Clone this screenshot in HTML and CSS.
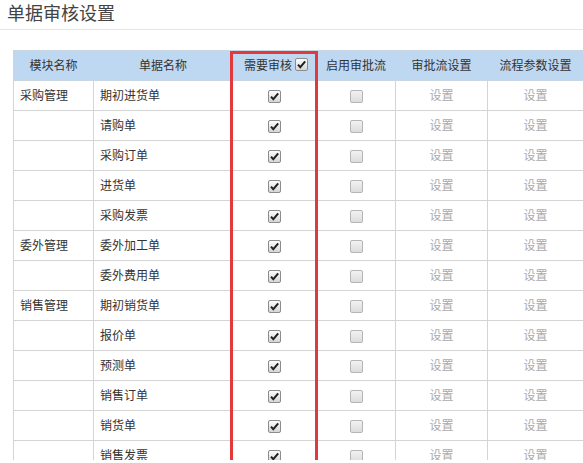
FILE: index.html
```html
<!DOCTYPE html>
<html lang="zh">
<head>
<meta charset="utf-8">
<link rel="stylesheet" href="styles.css">
</head>
<body>
<div class="page-title">单据审核设置</div>
<div class="content">
  <div class="scroll">
    <table class="grid">
      <colgroup>
        <col class="c1"><col class="c2"><col class="c3"><col class="c4"><col class="c5"><col class="c6">
      </colgroup>
      <thead>
        <tr>
          <th>模块名称</th>
          <th>单据名称</th>
          <th><span class="hd-audit">需要审核<span class="cb on"></span></span></th>
          <th>启用审批流</th>
          <th>审批流设置</th>
          <th>流程参数设置</th>
        </tr>
      </thead>
      <tbody>
        <tr><td class="l">采购管理</td><td class="l">期初进货单</td><td><span class="cb on"></span></td><td><span class="cb off"></span></td><td class="set">设置</td><td class="set">设置</td></tr>
        <tr><td class="l"></td><td class="l">请购单</td><td><span class="cb on"></span></td><td><span class="cb off"></span></td><td class="set">设置</td><td class="set">设置</td></tr>
        <tr><td class="l"></td><td class="l">采购订单</td><td><span class="cb on"></span></td><td><span class="cb off"></span></td><td class="set">设置</td><td class="set">设置</td></tr>
        <tr><td class="l"></td><td class="l">进货单</td><td><span class="cb on"></span></td><td><span class="cb off"></span></td><td class="set">设置</td><td class="set">设置</td></tr>
        <tr><td class="l"></td><td class="l">采购发票</td><td><span class="cb on"></span></td><td><span class="cb off"></span></td><td class="set">设置</td><td class="set">设置</td></tr>
        <tr><td class="l">委外管理</td><td class="l">委外加工单</td><td><span class="cb on"></span></td><td><span class="cb off"></span></td><td class="set">设置</td><td class="set">设置</td></tr>
        <tr><td class="l"></td><td class="l">委外费用单</td><td><span class="cb on"></span></td><td><span class="cb off"></span></td><td class="set">设置</td><td class="set">设置</td></tr>
        <tr><td class="l">销售管理</td><td class="l">期初销货单</td><td><span class="cb on"></span></td><td><span class="cb off"></span></td><td class="set">设置</td><td class="set">设置</td></tr>
        <tr><td class="l"></td><td class="l">报价单</td><td><span class="cb on"></span></td><td><span class="cb off"></span></td><td class="set">设置</td><td class="set">设置</td></tr>
        <tr><td class="l"></td><td class="l">预测单</td><td><span class="cb on"></span></td><td><span class="cb off"></span></td><td class="set">设置</td><td class="set">设置</td></tr>
        <tr><td class="l"></td><td class="l">销售订单</td><td><span class="cb on"></span></td><td><span class="cb off"></span></td><td class="set">设置</td><td class="set">设置</td></tr>
        <tr><td class="l"></td><td class="l">销货单</td><td><span class="cb on"></span></td><td><span class="cb off"></span></td><td class="set">设置</td><td class="set">设置</td></tr>
        <tr><td class="l"></td><td class="l">销售发票</td><td><span class="cb on"></span></td><td><span class="cb off"></span></td><td class="set">设置</td><td class="set">设置</td></tr>
      </tbody>
    </table>
  </div>
  <div class="highlight"></div>
</div>
</body>
</html>
```

FILE: styles.css
```css
html, body {
  margin: 0;
  padding: 0;
  background: #fff;
  overflow: hidden;
}
body {
  font-family: "Microsoft YaHei", "Noto Sans CJK SC", "Liberation Sans", sans-serif;
  color: #333;
}
.page-title {
  box-sizing: border-box;
  height: 30px;
  padding: 0 0 0 7px;
  font-size: 18px;
  line-height: 24px;
  color: #444;
  border-bottom: 1px solid #e6e6e6;
}
.content {
  position: relative;
  padding: 20px 0 0 13px;
}
.scroll {
  height: 410px;
  overflow: hidden;
}
.grid {
  border-collapse: collapse;
  table-layout: fixed;
  width: 570px;
  font-size: 12px;
}
.c1 { width: 80px; }
.c2 { width: 139px; }
.c3 { width: 84px; }
.c4 { width: 79px; }
.c5 { width: 92px; }
.c6 { width: 96px; }
.grid th, .grid td {
  border: 1px solid #d4d4d4;
  height: 27px;
  padding: 0 0 2px;
  text-align: center;
  vertical-align: middle;
  line-height: 16px;
}
.grid th {
  background: #bfd8f1;
  font-weight: normal;
  color: #333;
  border-color: #c8d6e4;
}
.grid td.l {
  text-align: left;
  padding-left: 6px;
}
.grid td.set {
  color: #aaa;
}
.hd-audit {
  display: inline-flex;
  align-items: center;
  gap: 3px;
  margin-left: 3px;
}
.cb {
  display: inline-block;
  width: 11px;
  height: 11px;
  border: 1px solid #8c8c8c;
  border-radius: 2px;
  vertical-align: middle;
  position: relative;
  top: 0;
}
.cb.on {
  background-image: url("data:image/svg+xml,%3Csvg xmlns='http://www.w3.org/2000/svg' width='11' height='11' viewBox='0 0 11 11'%3E%3Cpath d='M2 5.6 L4.3 8.2 L9.2 2.4' fill='none' stroke='%23222' stroke-width='2'/%3E%3C/svg%3E"), linear-gradient(#fdfdfd, #d6d6d6);
}
.cb.off {
  border-color: #b5b5b5;
  background: linear-gradient(#f2f2f2, #dcdcdc);
}
.highlight {
  position: absolute;
  left: 230px;
  top: 21px;
  width: 82px;
  height: 406px;
  border: 3px solid #e2393d;
  pointer-events: none;
}
```
